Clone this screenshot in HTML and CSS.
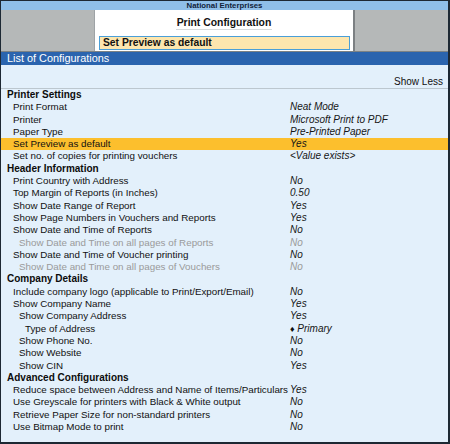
FILE: index.html
```html
<!DOCTYPE html>
<html>
<head>
<meta charset="utf-8">
<link rel="stylesheet" href="styles.css">
</head>
<body>
<div class="app">
  <div class="titlebar">National Enterprises</div>
  <div class="header">
    <div class="panel">
      <div class="panel-title">Print Configuration</div>
      <div class="field">Set Preview as default</div>
    </div>
  </div>
  <div class="listbar">List of Configurations</div>
  <div class="showless">Show Less</div>
  <div class="rows">
    <div class="row sec"><span class="lbl">Printer Settings</span><span class="val"></span></div>
    <div class="row l1"><span class="lbl">Print Format</span><span class="val">Neat Mode</span></div>
    <div class="row l1"><span class="lbl">Printer</span><span class="val">Microsoft Print to PDF</span></div>
    <div class="row l1"><span class="lbl">Paper Type</span><span class="val">Pre-Printed Paper</span></div>
    <div class="row l1 sel"><span class="lbl">Set Preview as default</span><span class="val">Yes</span></div>
    <div class="row l1"><span class="lbl">Set no. of copies for printing vouchers</span><span class="val">&lt;Value exists&gt;</span></div>
    <div class="row sec"><span class="lbl">Header Information</span><span class="val"></span></div>
    <div class="row l1"><span class="lbl">Print Country with Address</span><span class="val">No</span></div>
    <div class="row l1"><span class="lbl">Top Margin of Reports (in Inches)</span><span class="val">0.50</span></div>
    <div class="row l1"><span class="lbl">Show Date Range of Report</span><span class="val">Yes</span></div>
    <div class="row l1"><span class="lbl">Show Page Numbers in Vouchers and Reports</span><span class="val">Yes</span></div>
    <div class="row l1"><span class="lbl">Show Date and Time of Reports</span><span class="val">No</span></div>
    <div class="row l2 dim"><span class="lbl">Show Date and Time on all pages of Reports</span><span class="val">No</span></div>
    <div class="row l1"><span class="lbl">Show Date and Time of Voucher printing</span><span class="val">No</span></div>
    <div class="row l2 dim"><span class="lbl">Show Date and Time on all pages of Vouchers</span><span class="val">No</span></div>
    <div class="row sec"><span class="lbl">Company Details</span><span class="val"></span></div>
    <div class="row l1"><span class="lbl">Include company logo (applicable to Print/Export/Email)</span><span class="val">No</span></div>
    <div class="row l1"><span class="lbl">Show Company Name</span><span class="val">Yes</span></div>
    <div class="row l2"><span class="lbl">Show Company Address</span><span class="val">Yes</span></div>
    <div class="row l3"><span class="lbl">Type of Address</span><span class="val"><span class="dia">&#9830;</span> Primary</span></div>
    <div class="row l2"><span class="lbl">Show Phone No.</span><span class="val">No</span></div>
    <div class="row l2"><span class="lbl">Show Website</span><span class="val">No</span></div>
    <div class="row l2"><span class="lbl">Show CIN</span><span class="val">Yes</span></div>
    <div class="row sec"><span class="lbl">Advanced Configurations</span><span class="val"></span></div>
    <div class="row l1"><span class="lbl">Reduce space between Address and Name of Items/Particulars</span><span class="val">Yes</span></div>
    <div class="row l1"><span class="lbl">Use Greyscale for printers with Black &amp; White output</span><span class="val">No</span></div>
    <div class="row l1"><span class="lbl">Retrieve Paper Size for non-standard printers</span><span class="val">No</span></div>
    <div class="row l1"><span class="lbl">Use Bitmap Mode to print</span><span class="val">No</span></div>
  </div>
</div>
</body>
</html>
```
FILE: styles.css
```css
html, body {
  margin: 0;
  padding: 0;
  background: #ffffff;
}
.app {
  width: 450px;
  height: 444px;
  box-sizing: border-box;
  border: 1px solid #1d2833;
  border-right-width: 2px;
  border-bottom-width: 2px;
  background: #e3f0fb;
  display: flex;
  flex-direction: column;
  font-family: "Liberation Sans", Arial, sans-serif;
  overflow: hidden;
}
.titlebar {
  height: 9px;
  background: #8fbfe9;
  color: #10223a;
  font-weight: bold;
  font-size: 7.8px;
  line-height: 9px;
  text-align: center;
}
.header {
  height: 41px;
  background: #b5b8b8;
  border-bottom: 1px solid #7d8284;
  display: flex;
  justify-content: center;
}
.panel {
  width: 261px;
  box-sizing: border-box;
  background: #ffffff;
  border-left: 1px solid #9ea3a6;
  border-right: 2px solid #7c8083;
  display: flex;
  flex-direction: column;
  align-items: center;
}
.panel-title {
  margin-top: 7px;
  font-weight: bold;
  font-size: 10.4px;
  line-height: 12px;
  color: #111;
  border-bottom: 1px solid #d6dadc;
  padding: 0 1px;
}
.field {
  align-self: flex-start;
  margin: 6px 0 0 4px;
  width: 251px;
  height: 14px;
  box-sizing: border-box;
  border: 1px solid #4a9fd8;
  background: #fde6ae;
  font-weight: bold;
  font-size: 10.3px;
  line-height: 12px;
  padding-left: 3px;
  color: #111;
}
.listbar {
  height: 13px;
  background: #2b64ae;
  color: #ffffff;
  font-size: 10.9px;
  line-height: 13px;
  padding-left: 6px;
}
.showless {
  height: 12px;
  padding-top: 11px;
  font-size: 10px;
  line-height: 12px;
  text-align: right;
  padding-right: 5px;
  color: #111;
  border-bottom: 1px solid #bcc7cf;
}
.rows {
  display: flex;
  flex-direction: column;
}
.row {
  display: grid;
  grid-template-columns: 289px 1fr;
  height: 12.3px;
  font-size: 9.8px;
  line-height: 12.3px;
  color: #111;
  white-space: nowrap;
}
.row .val {
  font-style: italic;
  font-size: 10px;
  color: #161616;
}
.sec .lbl {
  font-weight: bold;
  font-size: 10px;
  padding-left: 6px;
  color: #0c0c0c;
}
.l1 .lbl { padding-left: 12px; }
.l2 .lbl { padding-left: 18px; }
.l3 .lbl { padding-left: 24px; }
.dim .lbl, .dim .val {
  color: #9a9a9a;
}
.sel {
  background: #fcbf2d;
}
.dia {
  font-style: normal;
  font-size: 9px;
  color: #111;
}
```
